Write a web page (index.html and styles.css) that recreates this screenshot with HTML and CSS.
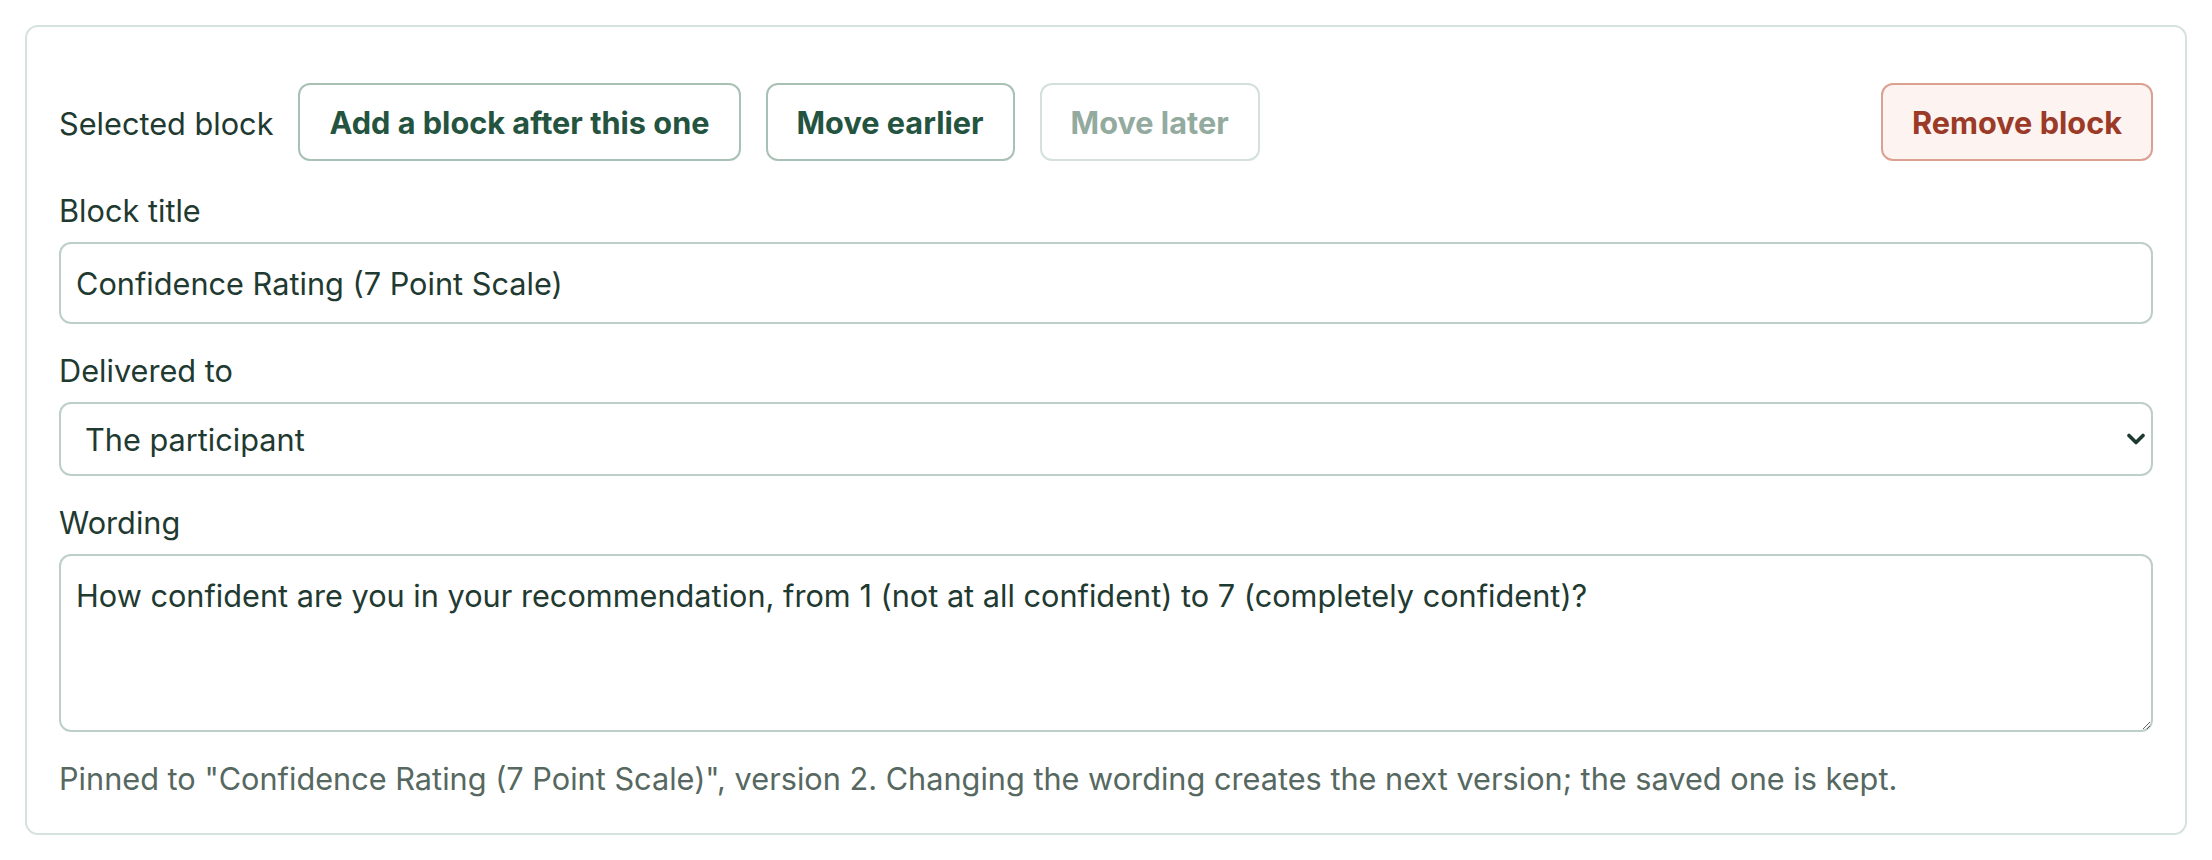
FILE: index.html
```html
<!DOCTYPE html>
<html lang="en">
<head>
<meta charset="utf-8">
<title>Selected block editor</title>
<link rel="stylesheet" href="styles.css">
</head>
<body>
<section class="card">
  <div class="toolbar">
    <span class="toolbar-label">Selected block</span>
    <button class="btn" type="button">Add a block after this one</button>
    <button class="btn" type="button">Move earlier</button>
    <button class="btn btn-disabled" type="button" disabled>Move later</button>
    <button class="btn btn-danger" type="button">Remove block</button>
  </div>
  <div class="field">
    <label class="field-label" for="title">Block title</label>
    <input class="control input" id="title" type="text" value="Confidence Rating (7 Point Scale)">
  </div>
  <div class="field">
    <label class="field-label" for="delivered">Delivered to</label>
    <div class="select-wrap">
      <select class="control select" id="delivered">
        <option>The participant</option>
      </select>
      <svg class="chevron" viewBox="0 0 18 12" width="18" height="12" aria-hidden="true"><path d="M2 2.5 L9 9.5 L16 2.5" fill="none" stroke="#1d3a30" stroke-width="3.6" stroke-linecap="round" stroke-linejoin="round"/></svg>
    </div>
  </div>
  <div class="field">
    <label class="field-label" for="wording">Wording</label>
    <textarea class="control textarea" id="wording">How confident are you in your recommendation, from 1 (not at all confident) to 7 (completely confident)?</textarea>
  </div>
  <p class="hint">Pinned to "Confidence Rating (7 Point Scale)", version 2. Changing the wording creates the next version; the saved one is kept.</p>
</section>
</body>
</html>
```
FILE: styles.css
```css
* { box-sizing: border-box; }

html, body {
  margin: 0;
  background: #ffffff;
}

body {
  padding: 25px;
  font-family: Inter, "Noto Sans", "Liberation Sans", sans-serif;
  font-size: 30.7px;
  line-height: 45px;
  color: #1f3a31;
}

.card {
  border: 2px solid #d6e2dc;
  border-radius: 13px;
  padding: 56px 32px 32px;
  display: flex;
  flex-direction: column;
  gap: 24px;
  min-height: 810px;
}

.toolbar {
  display: flex;
  align-items: center;
  gap: 25px;
  margin-bottom: 3px;
}

.toolbar-label {
  padding-top: 2px;
}

.btn {
  font-family: inherit;
  font-size: 30.7px;
  line-height: 45px;
  font-weight: 700;
  color: #24543f;
  background: #ffffff;
  border: 2px solid #a9c1b5;
  border-radius: 12px;
  padding: 15px 29px;
  height: 78px;
  cursor: pointer;
}

.btn-disabled {
  color: #93aa9f;
  border-color: #d4e1da;
  cursor: default;
}

.btn-danger {
  margin-left: auto;
  color: #9b3a27;
  background: #fdf3f1;
  border-color: #dca091;
}

.field {
  display: flex;
  flex-direction: column;
  gap: 9px;
}

.field-label {
  display: block;
}

.control {
  font-family: inherit;
  font-size: 30.7px;
  line-height: 45px;
  color: #1f3a31;
  background: #ffffff;
  border: 2px solid #bdcfc6;
  border-radius: 12px;
  width: 100%;
  margin: 0;
}

.input {
  height: 82px;
  padding: 0 15px;
}

.select-wrap {
  position: relative;
}

.select {
  appearance: none;
  -webkit-appearance: none;
  height: 74px;
  padding: 0 60px 0 24px;
}

.chevron {
  position: absolute;
  right: 8px;
  top: 31px;
  pointer-events: none;
}

.textarea {
  height: 178px;
  padding: 17px 15px;
  resize: vertical;
  display: block;
}

.hint {
  margin: 0;
  color: #56685f;
}
```
